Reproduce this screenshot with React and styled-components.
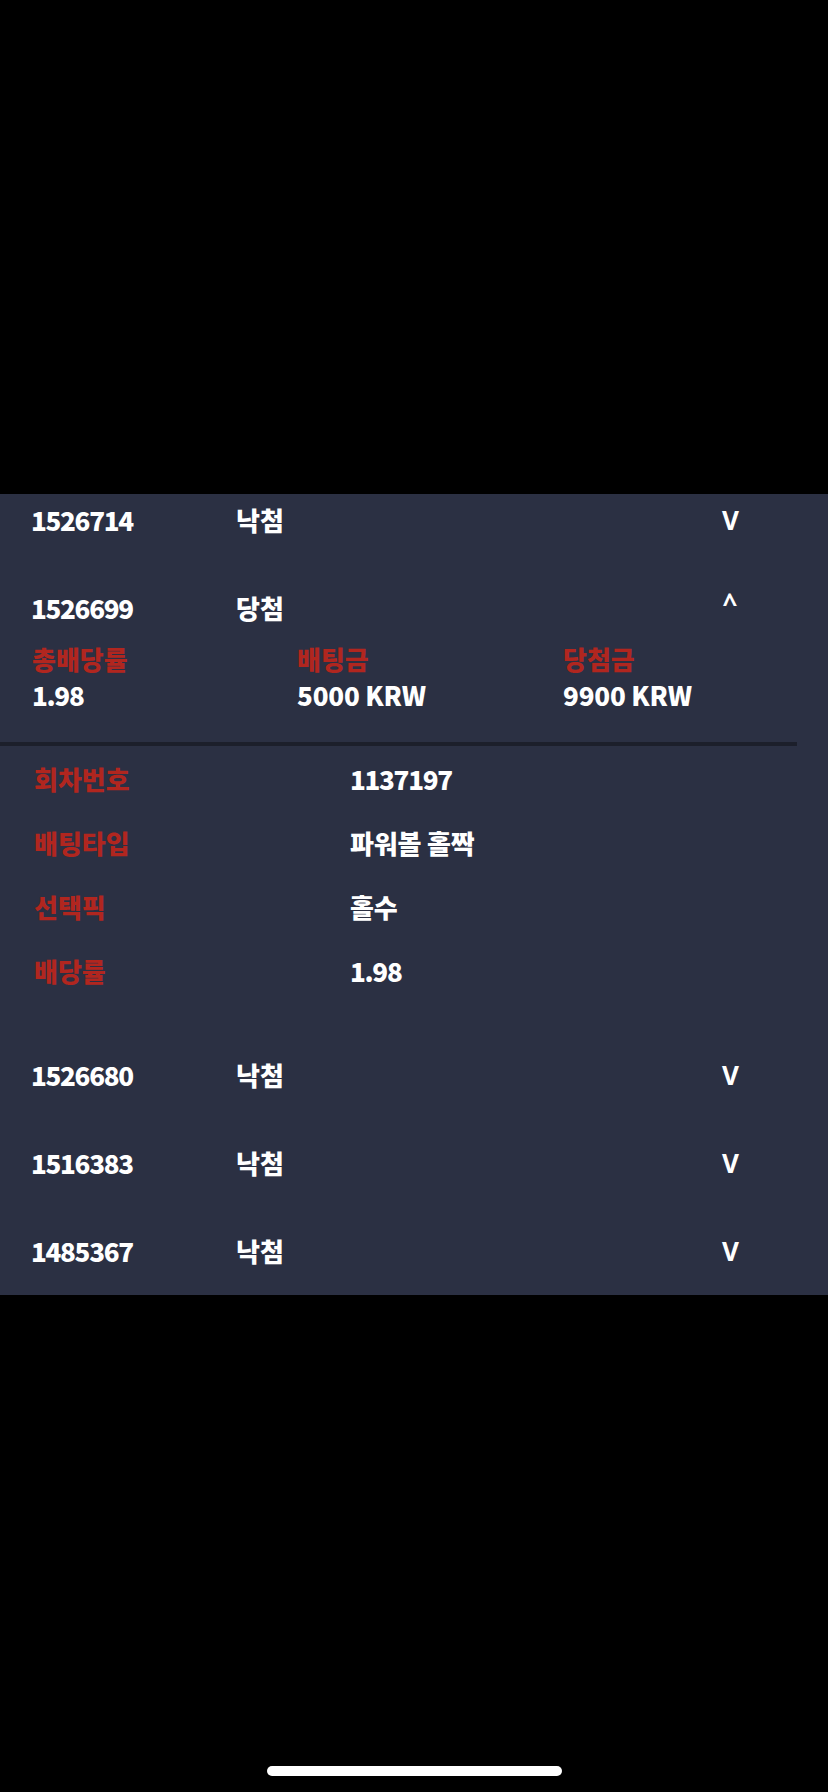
import React from 'react';
import styled, { createGlobalStyle } from 'styled-components';

const GlobalStyle = createGlobalStyle`
  html, body {
    margin: 0;
    padding: 0;
    background: #000;
  }
  body {
    font-family: "Noto Sans CJK KR", "Noto Sans", sans-serif;
  }
`;

const Screen = styled.div`
  width: 828px;
  height: 1792px;
  display: flex;
  flex-direction: column;
  background: #000;
  overflow: hidden;
`;

const TopSpace = styled.div`
  height: 494px;
  flex-shrink: 0;
`;

const Panel = styled.div`
  height: 801px;
  flex-shrink: 0;
  background: #2b3043;
  overflow: hidden;
`;

const List = styled.div`
  margin-top: -23px;
  display: flex;
  flex-direction: column;
`;

const Item = styled.div`
  padding: 30px 0 ${(p) => (p.open ? '24px' : '30px')};
`;

const Header = styled.div`
  display: grid;
  grid-template-columns: 205px 1fr auto;
  align-items: center;
  padding: 0 90px 0 31px;
  height: 28px;
  color: #fff;
  font-size: 26px;
  font-weight: 900;
`;

const Num = styled.span`
  letter-spacing: -1.3px;
`;

const Arrow = styled.span`
  width: 16px;
  text-align: center;
  font-family: "Noto Sans", sans-serif;
  font-size: 26px;
  font-weight: 700;
  line-height: 28px;
  ${(p) => p.up && 'transform: translateY(-5px);'}
`;

const Summary = styled.div`
  margin-top: 23px;
  display: grid;
  grid-template-columns: 265px 266px 1fr;
  grid-template-rows: 36px 36px;
  padding-left: 32px;
  font-size: 26px;
  font-weight: 900;
  align-items: center;
`;

const Label = styled.div`
  color: #b1261f;
`;

const Value = styled.div`
  color: #fff;
  letter-spacing: ${(p) => (p.num ? '-1.3px' : '-0.2px')};
`;

const Divider = styled.div`
  margin: 30px 31px 0 0;
  height: 4px;
  background: #1c1f2b;
`;

const Details = styled.div`
  display: grid;
  grid-template-columns: 316px 1fr;
  grid-auto-rows: 64px;
  align-items: center;
  padding-left: 34px;
  font-size: 26px;
  font-weight: 900;
`;

const BottomArea = styled.div`
  flex: 1;
  display: flex;
  justify-content: center;
  align-items: flex-end;
  padding-bottom: 16px;
`;

const HomeBar = styled.div`
  width: 295px;
  height: 10px;
  border-radius: 5px;
  background: #fff;
`;

const items = [
  { id: '1526714', status: '낙첨' },
  {
    id: '1526699',
    status: '당첨',
    open: true,
    summary: [
      ['총배당률', '1.98'],
      ['배팅금', '5000 KRW'],
      ['당첨금', '9900 KRW'],
    ],
    details: [
      ['회차번호', '1137197'],
      ['배팅타입', '파워볼 홀짝'],
      ['선택픽', '홀수'],
      ['배당률', '1.98'],
    ],
  },
  { id: '1526680', status: '낙첨' },
  { id: '1516383', status: '낙첨' },
  { id: '1485367', status: '낙첨' },
];

const isNum = (v) => /^[\d.]+$/.test(v);

export default function App() {
  return (
    <>
      <GlobalStyle />
      <Screen>
        <TopSpace />
        <Panel>
          <List>
            {items.map((item) => (
              <Item key={item.id} open={item.open}>
                <Header>
                  <Num>{item.id}</Num>
                  <span>{item.status}</span>
                  <Arrow up={item.open}>{item.open ? '^' : 'V'}</Arrow>
                </Header>
                {item.open && (
                  <>
                    <Summary>
                      {item.summary.map(([label]) => (
                        <Label key={label}>{label}</Label>
                      ))}
                      {item.summary.map(([label, value]) => (
                        <Value key={label} num={isNum(value)}>{value}</Value>
                      ))}
                    </Summary>
                    <Divider />
                    <Details>
                      {item.details.map(([label, value]) => (
                        <React.Fragment key={label}>
                          <Label>{label}</Label>
                          <Value num={isNum(value)}>{value}</Value>
                        </React.Fragment>
                      ))}
                    </Details>
                  </>
                )}
              </Item>
            ))}
          </List>
        </Panel>
        <BottomArea>
          <HomeBar />
        </BottomArea>
      </Screen>
    </>
  );
}
